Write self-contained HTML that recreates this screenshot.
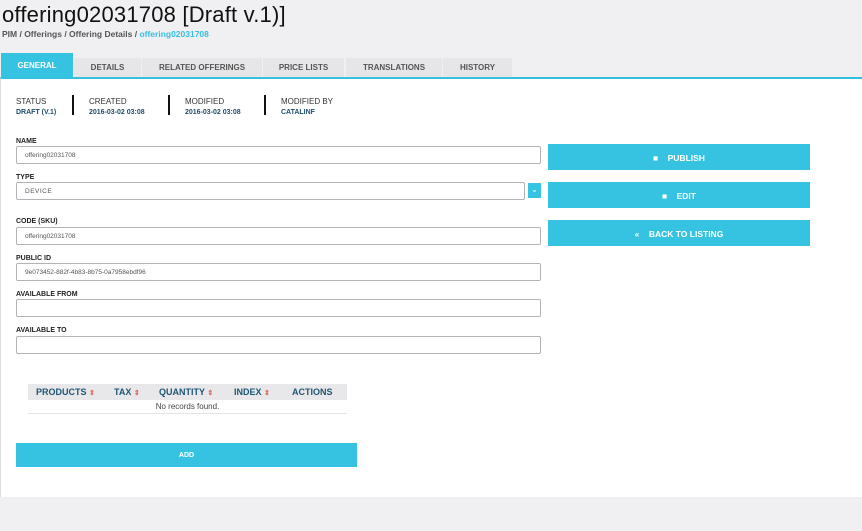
<!DOCTYPE html>
<html><head><style>
*{margin:0;padding:0;box-sizing:border-box}
body{width:862px;height:531px;background:#f0f0f2;font-family:"Liberation Sans",sans-serif;position:relative;overflow:hidden;color:#222}
.a{position:absolute}
h1{position:absolute;left:2px;top:2px;font-size:22px;font-weight:normal;color:#111;letter-spacing:0.2px}
.bc{left:2px;top:29px;font-size:8.5px;font-weight:bold;color:#555}
.bc span{color:#35c0e0}
.tab{position:absolute;top:58px;height:19px;background:#e6e6e8;font-size:8px;font-weight:bold;color:#555;text-align:center;line-height:20px}
.panel{left:0;top:77px;width:862px;height:420px;background:#fff;border-top:2px solid #35c0e0;border-left:1px solid #ddd}
.lbl{font-size:7px;font-weight:bold;color:#222;position:absolute;left:16px}
.in{position:absolute;left:16px;width:525px;height:18px;border:1px solid #b0b4b8;border-radius:2px;font-size:6.5px;color:#555;padding-left:8px;line-height:17px}
.btn{position:absolute;left:548px;width:262px;height:26px;background:#35c3e1;color:#fff;font-size:8.5px;font-weight:bold;text-align:center;line-height:28px}
.st{position:absolute;top:97px;font-size:8px;color:#333}
.st b{display:block;font-size:7px;color:#1d4d6b;margin-top:3px}
.sep{position:absolute;top:95px;width:1.5px;height:20px;background:#111}
</style></head><body>
<h1>offering02031708 [Draft v.1)]</h1>
<div class="a bc">PIM / Offerings / Offering Details / <span>offering02031708</span></div>
<div class="a panel"></div>
<div class="tab" style="left:1px;top:53px;height:24px;width:72px;background:#35c3e1;color:#fff;line-height:26px">GENERAL</div>
<div class="tab" style="left:74px;width:67px">DETAILS</div>
<div class="tab" style="left:142px;width:120px">RELATED OFFERINGS</div>
<div class="tab" style="left:263px;width:81px">PRICE LISTS</div>
<div class="tab" style="left:346px;width:96px">TRANSLATIONS</div>
<div class="tab" style="left:443px;width:69px">HISTORY</div>
<div class="st" style="left:16px">STATUS<b>DRAFT (V.1)</b></div>
<div class="sep" style="left:72px"></div>
<div class="st" style="left:89px">CREATED<b>2016-03-02 03:08</b></div>
<div class="sep" style="left:168px"></div>
<div class="st" style="left:185px">MODIFIED<b>2016-03-02 03:08</b></div>
<div class="sep" style="left:264px"></div>
<div class="st" style="left:281px">MODIFIED BY<b>CATALINF</b></div>
<div class="lbl" style="top:138px">NAME</div>
<div class="in" style="top:146px">offering02031708</div>
<div class="lbl" style="top:174px">TYPE</div>
<div class="in" style="top:182px;width:509px;font-size:6.5px;letter-spacing:0.5px">DEVICE</div>
<div class="a" style="left:528px;top:183px;width:13px;height:15px;background:#35c3e1;color:#fff;font-size:8px;text-align:center;line-height:14px">⌄</div>
<div class="lbl" style="top:218px">CODE (SKU)</div>
<div class="in" style="top:227px">offering02031708</div>
<div class="lbl" style="top:255px">PUBLIC ID</div>
<div class="in" style="top:263px">9e073452-882f-4b83-8b75-0a7958ebdf96</div>
<div class="lbl" style="top:291px">AVAILABLE FROM</div>
<div class="in" style="top:299px"></div>
<div class="lbl" style="top:327px">AVAILABLE TO</div>
<div class="in" style="top:336px"></div>
<div class="btn" style="top:144px">■ &nbsp;&nbsp; PUBLISH</div>
<div class="btn" style="top:182px">■ &nbsp;&nbsp; EDIT</div>
<div class="btn" style="top:220px">« &nbsp;&nbsp; BACK TO LISTING</div>
<div class="a" style="left:28px;top:384px;width:319px;height:16px;background:#e8e8ea;font-size:9px;font-weight:bold;color:#1d5574;line-height:16px">
<span class="a" style="left:8px">PRODUCTS <span style="color:#e06050;font-size:7px">⇕</span></span>
<span class="a" style="left:86px">TAX <span style="color:#e06050;font-size:7px">⇕</span></span>
<span class="a" style="left:131px">QUANTITY <span style="color:#e06050;font-size:7px">⇕</span></span>
<span class="a" style="left:206px">INDEX <span style="color:#e06050;font-size:7px">⇕</span></span>
<span class="a" style="left:264px">ACTIONS</span></div>
<div class="a" style="left:28px;top:400px;width:319px;height:14px;border-bottom:1px solid #e4e4e4;font-size:8px;color:#444;text-align:center;line-height:14px">No records found.</div>
<div class="a" style="left:16px;top:443px;width:341px;height:24px;background:#35c3e1;color:#fff;font-size:7px;font-weight:bold;text-align:center;line-height:26px">ADD</div>
</body></html>
